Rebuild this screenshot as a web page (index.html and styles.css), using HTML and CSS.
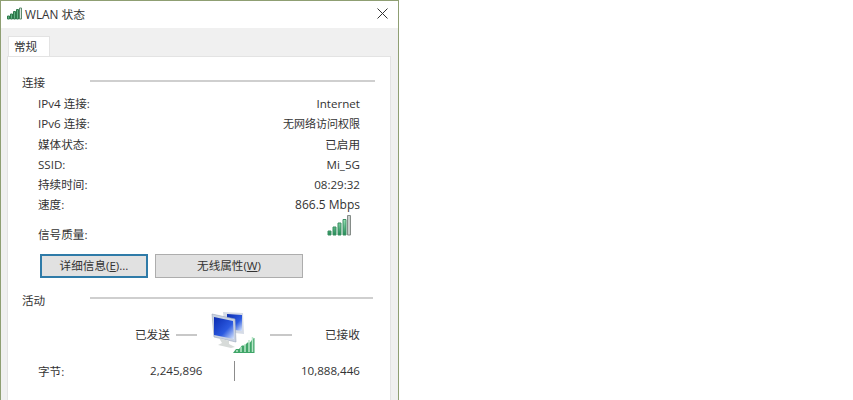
FILE: index.html

```html
<!DOCTYPE html>
<html lang="zh-CN">
<head>
    <meta charset="UTF-8">
    <meta name="viewport" content="width=device-width, initial-scale=1.0">
    <title>WLAN 状态</title>
    <link rel="stylesheet" href="styles.css">
</head>
<body>
    <div class="window">
        <div class="titlebar">
            <svg class="title-icon" width="15" height="13" viewBox="0 0 15 13">
                <path d="M.5 9h2v3h-2zM3.500 7h2v5h-2zM6.500 4.500h2V12h-2zM9.500 2.500h2V12h-2z" fill="#5fb283" stroke="#2f7a4c" stroke-width="1"/>
                <path d="M12.500 1h2v11h-2z" fill="#dfe8e2" stroke="#5c8a6c" stroke-width="1"/>
            </svg>
            <span class="title-text">WLAN 状态</span>
            <svg class="close-icon" width="11" height="11" viewBox="0 0 11 11">
                <path d="M.5.500l10 10M10.500.500l-10 10" stroke="#333" stroke-width="1" fill="none"/>
            </svg>
        </div>
        <div class="body">
            <div class="tabs"><div class="tab">常规</div></div>
            <div class="panel">
                <div class="group-head"><span>连接</span><div class="group-line"></div></div>
                <div class="rows">
                    <div class="row"><span>IPv4 连接:</span><span>Internet</span></div>
                    <div class="row"><span>IPv6 连接:</span><span class="value-small">无网络访问权限</span></div>
                    <div class="row"><span>媒体状态:</span><span>已启用</span></div>
                    <div class="row"><span>SSID:</span><span>Mi_5G</span></div>
                    <div class="row"><span>持续时间:</span><span>08:29:32</span></div>
                    <div class="row"><span>速度:</span><span class="value-large">866.5 Mbps</span></div>
                </div>
                <div class="signal-row">
                    <span>信号质量:</span>
                    <svg width="24" height="21" viewBox="0 0 24 21">
                        <defs>
                            <linearGradient id="bar" x1="0" y1="0" x2="0" y2="1">
                                <stop offset="0" stop-color="#9be4b8"/>
                                <stop offset="1" stop-color="#1f8a55"/>
                            </linearGradient>
                        </defs>
                        <path d="M1 16h3v4H1zM6 12h3v8H6zM11 8h3v12h-3zM16 4.500h3V20h-3z" fill="url(#bar)" stroke="#3c8f63" stroke-width="1"/>
                        <path d="M20.500 .5h3V20h-3z" fill="#c9cfcb" stroke="#858c88" stroke-width="1"/>
                    </svg>
                </div>
                <div class="buttons">
                    <div class="btn btn-default">详细信息(<u>E</u>)...</div>
                    <div class="btn btn-wide">无线属性(<u>W</u>)</div>
                </div>
                <div class="group-head group-head-activity"><span>活动</span><div class="group-line"></div></div>
                <div class="activity">
                    <span class="activity-label">已发送</span>
                    <div class="dash"></div>
                    <svg class="net-icon" width="46" height="43" viewBox="0 0 46 43">
                        <defs>
                            <linearGradient id="screen" x1="0" y1="0" x2="1" y2="1">
                                <stop offset="0" stop-color="#0a2bb0"/>
                                <stop offset=".6" stop-color="#2c5ae0"/>
                                <stop offset="1" stop-color="#dbe8fc"/>
                            </linearGradient>
                        </defs>
                        <path d="M13 1l20 1 1 21-19-2z" fill="#d5dbe6"/>
                        <path d="M17 3l15 1v16l-15-2z" fill="url(#screen)"/>
                        <path d="M2 3l23 5 1 23-22-5z" fill="#c9d2e2" stroke="#9aa6ba" stroke-width=".6"/>
                        <path d="M4 6l19 4 1 18-20-4z" fill="url(#screen)"/>
                        <path d="M9 27l10 3v3l6 3-4 1-13-3 4-2z" fill="#d7dbd9"/>
                        <path d="M23 42l3-4h3l3-3.500h2.500l3-3h2.500l3-4 1.500-.5V42z" fill="#3fa568"/>
                        <path d="M27 41v-2M31 41v-5M35 41v-8M39 41V29M42.500 41V26" stroke="#b9e6c8" stroke-width="1.500"/>
                    </svg>
                    <div class="dash dash-right"></div>
                    <span class="activity-label activity-received">已接收</span>
                </div>
                <div class="bytes">
                    <span class="bytes-label">字节:</span>
                    <span class="bytes-sent">2,245,896</span>
                    <div class="bytes-divider"></div>
                    <span class="bytes-received">10,888,446</span>
                </div>
            </div>
        </div>
    </div>
</body>
</html>
```

FILE: styles.css

```css
html, body {
    margin: 0;
    padding: 0;
    height: 400px;
    overflow: hidden;
    background: #fff;
}
body {
    font-family: "Open Sans", "Noto Sans CJK SC", sans-serif;
    font-size: 11.600px;
    color: #333;
}
.window {
    width: 399px;
    height: 400px;
    box-sizing: border-box;
    border: 1px solid #8f9f73;
    border-bottom: none;
    display: flex;
    flex-direction: column;
}
.titlebar {
    height: 27px;
    flex: none;
    display: flex;
    align-items: center;
    padding: 0 10px 2px 6px;
    box-sizing: border-box;
    background: #fff;
}
.title-icon {
    margin-right: 3px;
}
.title-text {
    flex: 1;
    font-size: 11.800px;
}
.body {
    flex: 1;
    background: #f0f0f0;
    padding: 8px 7px 0 6px;
    display: flex;
    flex-direction: column;
}
.tabs {
    display: flex;
    height: 20px;
    flex: none;
}
.tab {
    width: 42px;
    padding-left: 5px;
    box-sizing: border-box;
    margin-left: 1px;
    background: #fff;
    border: 1px solid #e3e3e3;
    border-bottom: none;
    line-height: 19px;
}
.panel {
    flex: 1;
    background: #fff;
    border: 1px solid #e3e3e3;
    border-bottom: none;
    padding: 16px 30px 0 15px;
}
.group-head {
    display: flex;
    align-items: center;
    height: 18px;
    margin-left: -1px;
}
.group-line {
    flex: 1;
    height: 2px;
    background: #cfcfcf;
    margin: 0 -15px 2px 45px;
}
.rows {
    margin-top: 3px;
    padding-left: 15px;
}
.row {
    display: flex;
    justify-content: space-between;
    height: 20.300px;
    line-height: 20px;
}
.value-small {
    font-size: 11px;
}
.value-large {
    font-size: 12px;
}
.signal-row {
    display: flex;
    justify-content: space-between;
    align-items: flex-end;
    height: 23px;
    padding-left: 15px;
    margin-right: 9px;
    margin-top: -3px;
}
.signal-row span {
    line-height: 18px;
    margin-bottom: -8px;
}
.buttons {
    display: flex;
    gap: 7px;
    margin-top: 18px;
    padding-left: 17px;
}
.btn {
    height: 24px;
    box-sizing: border-box;
    line-height: 22px;
    text-align: center;
    background: #e1e1e1;
    border: 1px solid #adadad;
}
.btn-default {
    width: 108px;
    border: 2px solid #2f7ba8;
    line-height: 20px;
}
.btn-wide {
    width: 148px;
}
.group-head-activity {
    margin-top: 13px;
}
.group-head-activity .group-line {
    margin: 0 -13px 4px 45px;
}
.activity {
    display: flex;
    align-items: center;
    height: 43px;
    margin-top: 4px;
    white-space: nowrap;
}
.activity-label {
    flex: none;
    width: 41px;
    margin-left: 112px;
}
.activity-received {
    width: auto;
    margin-left: 33px;
}
.dash {
    flex: none;
    width: 21px;
    height: 2px;
    background: #c8c8c8;
    margin-top: 1px;
}
.dash-right {
    width: 22px;
}
.net-icon {
    margin: -4px 14px 0 13px;
    flex: none;
}
.bytes {
    display: flex;
    align-items: center;
    height: 20px;
    margin-top: 5px;
    padding-left: 15px;
}
.bytes-label {
    flex: none;
    width: 112px;
}
.bytes-sent {
    flex: none;
    width: 52px;
    text-align: right;
    white-space: nowrap;
}
.bytes-divider {
    flex: none;
    width: 1px;
    height: 20px;
    background: #8c8c8c;
    margin-left: 32px;
}
.bytes-received {
    flex: 1;
    text-align: right;
}
```
